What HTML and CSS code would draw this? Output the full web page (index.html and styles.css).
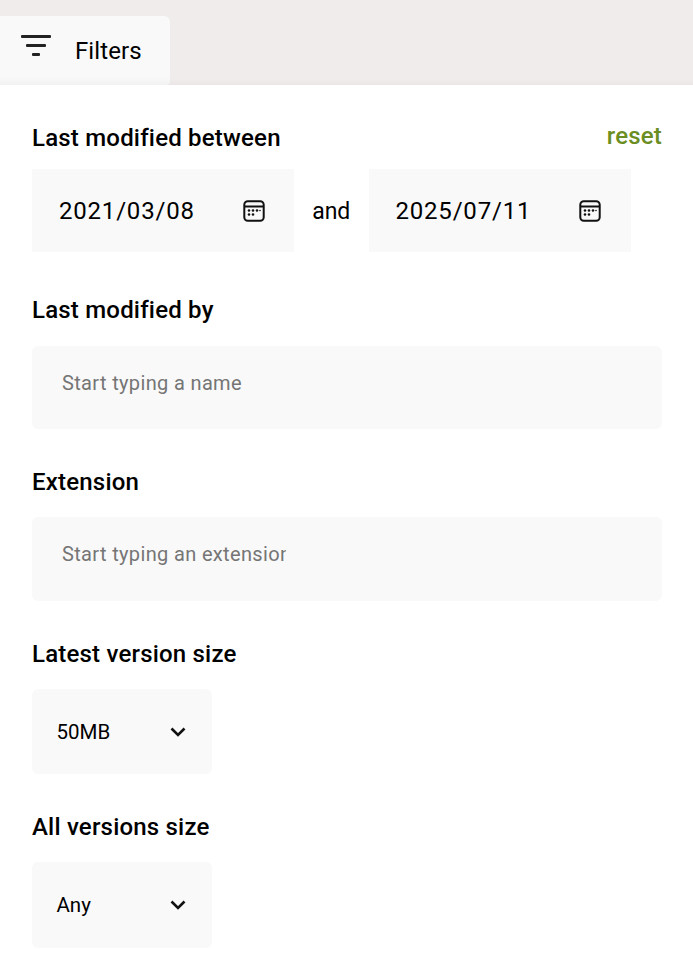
FILE: index.html
```html
<!DOCTYPE html>
<html lang="en">
<head>
    <meta charset="UTF-8">
    <meta name="viewport" content="width=device-width, initial-scale=1.0">
    <title>Filters</title>
    <link rel="stylesheet" href="styles.css">
</head>
<body>
    <!-- Tab bar -->
    <div class="tab-bar">
        <div class="tab">
            <svg class="filter-icon" width="32" height="24" viewBox="0 0 32 24">
                <rect x="1" y="0" width="30" height="3" rx="1"/>
                <rect x="6" y="9" width="20" height="3" rx="1"/>
                <rect x="12" y="18" width="8" height="3" rx="1"/>
            </svg>
            <span>Filters</span>
        </div>
    </div>

    <div class="panel">
        <!-- Dates -->
        <section class="group group-dates">
            <div class="label-row">
                <h3>Last modified between</h3>
                <a class="reset">reset</a>
            </div>
            <div class="date-row">
                <div class="date-field">
                    <span>2021/03/08</span>
                    <svg class="cal-icon" width="24" height="24" viewBox="0 0 24 24">
                        <rect x="2.3" y="2.3" width="19.4" height="19.4" rx="3.5"/>
                        <path d="M2.3 7.5h19.4"/>
                        <g class="dots">
                            <circle cx="7" cy="11.5" r="1.3"/><circle cx="11" cy="11.5" r="1.3"/><circle cx="15" cy="11.5" r="1.3"/><circle cx="18" cy="11.5" r=".8"/>
                            <circle cx="7" cy="15.5" r="1.3"/><circle cx="11" cy="15.5" r="1.3"/>
                        </g>
                    </svg>
                </div>
                <span class="and">and</span>
                <div class="date-field">
                    <span>2025/07/11</span>
                    <svg class="cal-icon" width="24" height="24" viewBox="0 0 24 24">
                        <rect x="2.3" y="2.3" width="19.4" height="19.4" rx="3.5"/>
                        <path d="M2.3 7.5h19.4"/>
                        <g class="dots">
                            <circle cx="7" cy="11.5" r="1.3"/><circle cx="11" cy="11.5" r="1.3"/><circle cx="15" cy="11.5" r="1.3"/><circle cx="18" cy="11.5" r=".8"/>
                            <circle cx="7" cy="15.5" r="1.3"/><circle cx="11" cy="15.5" r="1.3"/>
                        </g>
                    </svg>
                </div>
            </div>
        </section>

        <section class="group">
            <h3>Last modified by</h3>
            <input class="text-input" type="text" placeholder="Start typing a name">
        </section>

        <section class="group">
            <h3>Extension</h3>
            <input class="text-input" type="text" placeholder="Start typing an extension">
        </section>

        <section class="group group-select">
            <h3>Latest version size</h3>
            <div class="select-box">
                <span>50MB</span>
                <svg class="chevron" width="16" height="10" viewBox="0 0 16 10"><path d="M1.5 1.5L8 8l6.5-6.5"/></svg>
            </div>
        </section>

        <section class="group group-select">
            <h3>All versions size</h3>
            <div class="select-box select-tall">
                <span>Any</span>
                <svg class="chevron" width="16" height="10" viewBox="0 0 16 10"><path d="M1.5 1.5L8 8l6.5-6.5"/></svg>
            </div>
        </section>
    </div>
</body>
</html>
```

FILE: styles.css
```css
* {
    box-sizing: border-box;
}

body {
    margin: 0;
    font-family: Roboto, "Liberation Sans", sans-serif;
    color: #000;
    background: #fff;
}

.tab-bar {
    height: 85px;
    padding-top: 16px;
    background: #f0ecec;
    box-shadow: inset 0 -6px 6px -6px rgba(0, 0, 0, 0.06);
}

.tab {
    display: flex;
    align-items: center;
    width: 170px;
    height: 69px;
    padding-left: 20px;
    background: linear-gradient(to bottom, #f9f9f9 88%, #f3f2f2);
    border-radius: 0 6px 4px 0;
    font-size: 24px;
    letter-spacing: 0.1px;
}

.filter-icon {
    margin-right: 23px;
    margin-top: -8px;
    fill: #222;
}

.panel {
    padding: 0 31px 0 32px;
}

.group {
    margin-bottom: 37.5px;
}

.group-dates {
    padding-top: 38px;
    margin-bottom: 43px;
}

.group-select {
    padding-top: 1px;
    margin-bottom: 37px;
}

h3 {
    margin: 0 0 20.5px;
    font-size: 24px;
    line-height: 30px;
    font-weight: 500;
    letter-spacing: 0.2px;
}

.group-select h3 {
    margin-bottom: 20px;
}

.label-row {
    display: flex;
    justify-content: space-between;
    margin-bottom: 16px;
}

.label-row h3 {
    margin: 0;
}

.reset {
    margin-top: -2px;
    font-size: 24px;
    line-height: 30px;
    font-weight: 500;
    letter-spacing: 0.2px;
    color: #6b8e23;
}

.date-row {
    display: flex;
    align-items: center;
}

.date-field {
    display: flex;
    align-items: center;
    justify-content: space-between;
    width: 262px;
    height: 83px;
    padding: 1px 28.2px 0 27px;
    background: #f9f9f9;
    font-size: 24px;
    letter-spacing: 0.8px;
}

.and {
    width: 74.5px;
    padding-top: 2px;
    text-align: center;
    font-size: 23px;
}

.cal-icon {
    fill: none;
    stroke: #111;
    stroke-width: 2;
}

.cal-icon .dots {
    fill: #111;
    stroke: none;
}

.text-input {
    display: block;
    width: 100%;
    height: 83.5px;
    padding: 0 376px 9px 30px;
    border: none;
    outline: none;
    border-radius: 6px;
    background: #f9f9f9;
    font-family: inherit;
    font-size: 20px;
    letter-spacing: 0.35px;
}

.text-input::placeholder {
    color: #757575;
    opacity: 1;
}

.select-box {
    display: flex;
    align-items: center;
    justify-content: space-between;
    width: 180px;
    height: 85px;
    padding: 1px 26px 0 24.5px;
    border-radius: 6px;
    background: #f9f9f9;
    font-size: 20.5px;
}

.select-tall {
    height: 86px;
    padding-top: 0;
}

.chevron {
    fill: none;
    stroke: #111;
    stroke-width: 2.6;
}
```
